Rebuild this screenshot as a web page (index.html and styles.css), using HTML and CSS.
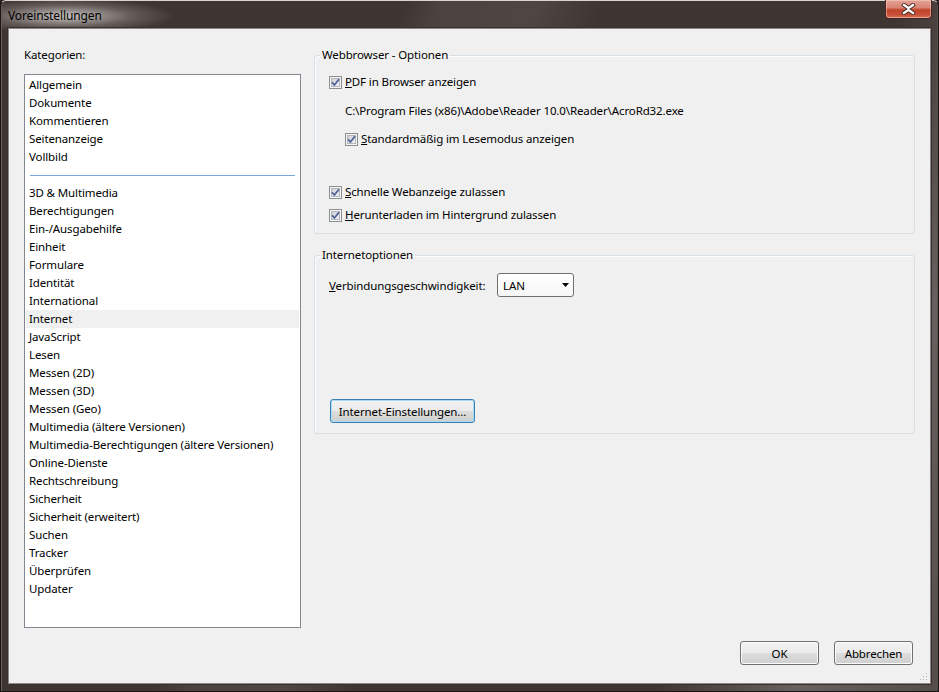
FILE: index.html
```html
<!DOCTYPE html>
<html lang="de">
<head>
    <meta charset="UTF-8">
    <title>Voreinstellungen</title>
    <link rel="stylesheet" href="styles.css">
</head>
<body>
    <div class="window">
        <div class="titlebar">
            <span class="title">Voreinstellungen</span>
            <div class="close-btn">
                <svg width="15" height="12" viewBox="0 0 15 12">
                    <path d="M3 2 L7.5 5.2 L12 2 M3 10 L7.5 6.8 L12 10" fill="none" stroke="#4a302a" stroke-width="4" stroke-linecap="square"/>
                    <path d="M3 2 L7.5 5.2 L12 2 M3 10 L7.5 6.8 L12 10" fill="none" stroke="#ffffff" stroke-width="2.2" stroke-linecap="square"/>
                </svg>
            </div>
        </div>

        <div class="client">
            <div class="main">
                <div class="categories">
                    <div class="label">Kate<u>g</u>orien:</div>
                    <ul class="cat-list">
                        <li>Allgemein</li>
                        <li>Dokumente</li>
                        <li>Kommentieren</li>
                        <li>Seitenanzeige</li>
                        <li>Vollbild</li>
                        <li class="separator"></li>
                        <li>3D &amp; Multimedia</li>
                        <li>Berechtigungen</li>
                        <li>Ein-/Ausgabehilfe</li>
                        <li>Einheit</li>
                        <li>Formulare</li>
                        <li>Identität</li>
                        <li>International</li>
                        <li class="selected">Internet</li>
                        <li>JavaScript</li>
                        <li>Lesen</li>
                        <li>Messen (2D)</li>
                        <li>Messen (3D)</li>
                        <li>Messen (Geo)</li>
                        <li>Multimedia (ältere Versionen)</li>
                        <li>Multimedia-Berechtigungen (ältere Versionen)</li>
                        <li>Online-Dienste</li>
                        <li>Rechtschreibung</li>
                        <li>Sicherheit</li>
                        <li>Sicherheit (erweitert)</li>
                        <li>Suchen</li>
                        <li>Tracker</li>
                        <li>Überprüfen</li>
                        <li>Updater</li>
                    </ul>
                </div>

                <div class="options">
                    <fieldset class="group group-web">
                        <legend>Webbrowser - Optionen</legend>
                        <div class="group-body">
                            <div class="check-row row-pdf">
                                <span class="check"><svg width="9" height="9" viewBox="0 0 9 9"><path d="M1 4.2 L3.4 7 L8 1.2" fill="none" stroke="#4a5e96" stroke-width="1.7"/></svg></span>
                                <span><u>P</u>DF in Browser anzeigen</span>
                            </div>
                            <div class="path">C:\Program Files (x86)\Adobe\Reader 10.0\Reader\AcroRd32.exe</div>
                            <div class="check-row row-read">
                                <span class="check"><svg width="9" height="9" viewBox="0 0 9 9"><path d="M1 4.2 L3.4 7 L8 1.2" fill="none" stroke="#4a5e96" stroke-width="1.7"/></svg></span>
                                <span><u>S</u>tandardmäßig im Lesemodus anzeigen</span>
                            </div>
                            <div class="check-row row-fast">
                                <span class="check"><svg width="9" height="9" viewBox="0 0 9 9"><path d="M1 4.2 L3.4 7 L8 1.2" fill="none" stroke="#4a5e96" stroke-width="1.7"/></svg></span>
                                <span><u>S</u>chnelle Webanzeige zulassen</span>
                            </div>
                            <div class="check-row row-bg">
                                <span class="check"><svg width="9" height="9" viewBox="0 0 9 9"><path d="M1 4.2 L3.4 7 L8 1.2" fill="none" stroke="#4a5e96" stroke-width="1.7"/></svg></span>
                                <span><u>H</u>erunterladen im Hintergrund zulassen</span>
                            </div>
                        </div>
                    </fieldset>

                    <fieldset class="group group-net">
                        <legend>Internetoptionen</legend>
                        <div class="group-body">
                            <div class="speed-row">
                                <span class="speed-label"><u>V</u>erbindungsgeschwindigkeit:</span>
                                <div class="combo">
                                    <span>LAN</span>
                                    <svg width="7" height="4" viewBox="0 0 7 4"><path d="M0 0 H7 L3.5 4 Z" fill="#000"/></svg>
                                </div>
                            </div>
                            <button class="btn btn-default">Internet-Einstellungen...</button>
                        </div>
                    </fieldset>
                </div>
            </div>

            <div class="footer">
                <button class="btn">OK</button>
                <button class="btn">Abbrechen</button>
            </div>

            <svg class="grip" width="9" height="9" viewBox="0 0 9 9">
                <rect x="7" y="1" width="1" height="1" fill="#b8b8b8"/>
                <rect x="4" y="4" width="1" height="1" fill="#b8b8b8"/>
                <rect x="7" y="4" width="1" height="1" fill="#b8b8b8"/>
                <rect x="1" y="7" width="1" height="1" fill="#b8b8b8"/>
                <rect x="4" y="7" width="1" height="1" fill="#b8b8b8"/>
                <rect x="7" y="7" width="1" height="1" fill="#b8b8b8"/>
            </svg>
        </div>
    </div>
</body>
</html>
```

FILE: styles.css
```css
body {
    margin: 0;
    padding: 0;
    background-color: #2a2220;
    font-family: "Noto Sans", "Open Sans", sans-serif;
    font-size: 11.5px;
    letter-spacing: -0.12px;
    color: #000;
}

.window {
    width: 939px;
    height: 692px;
    box-sizing: border-box;
    padding: 0 7px 7px 7px;
    display: flex;
    flex-direction: column;
    border-radius: 6px 6px 0 0;
    border: 1px solid #1a1412;
    border-top-color: #d8d4d2;
    background:
        radial-gradient(ellipse 110px 18px at 64px 15px, rgba(222, 219, 217, 0.85), rgba(160, 154, 151, 0.4) 60%, rgba(120, 112, 110, 0) 100%),
        linear-gradient(110deg, rgba(255, 255, 255, 0) 34%, rgba(255, 255, 255, 0.07) 37%, rgba(255, 255, 255, 0.09) 45%, rgba(255, 255, 255, 0) 51%, rgba(255, 255, 255, 0) 76%, rgba(255, 255, 255, 0.08) 80%, rgba(255, 255, 255, 0.22) 88%, rgba(255, 255, 255, 0.12) 100%),
        #3e3431;
    box-shadow: inset 1px 0 #6a5e5a, inset -1px 0 #5a4e4b;
}

.titlebar {
    height: 27px;
    display: flex;
    justify-content: space-between;
    align-items: flex-start;
    flex-shrink: 0;
}

.title {
    margin-top: 6px;
    line-height: 18px;
    font-size: 12px;
}

.close-btn {
    width: 47px;
    height: 19px;
    margin-top: -1px;
    margin-right: -1px;
    box-sizing: border-box;
    border: 1px solid #4a2620;
    border-top: none;
    border-radius: 0 0 4px 4px;
    background: linear-gradient(#e3a395 0%, #d88472 42%, #c2442b 55%, #c64f36 80%, #d6735a 100%);
    box-shadow: inset 0 0 0 1px rgba(255, 220, 210, 0.45);
    display: flex;
    justify-content: center;
    align-items: center;
}

.client {
    flex: 1;
    position: relative;
    display: flex;
    flex-direction: column;
    background-color: #f0f0f0;
    border: 1px solid #8c8684;
    box-shadow: 0 0 0 1px #3a302d;
    padding: 17px 15px 0 15px;
}

.main {
    height: 582px;
    display: flex;
    gap: 13px;
}

.categories {
    width: 277px;
    display: flex;
    flex-direction: column;
}

.label {
    line-height: 18px;
    margin-bottom: 10px;
}

.cat-list {
    flex: 1;
    list-style: none;
    margin: 0;
    padding: 1px;
    background-color: #fff;
    border: 1px solid #828790;
}

.cat-list li {
    height: 18px;
    line-height: 18px;
    padding-left: 3px;
    white-space: nowrap;
}

.cat-list .selected {
    background-color: #f0f0f0;
}

.cat-list .separator {
    position: relative;
}

.cat-list .separator::after {
    content: '';
    position: absolute;
    left: 4px;
    right: 4px;
    top: 9px;
    height: 1px;
    background-color: #76a7dc;
}

.options {
    width: 601px;
    display: flex;
    flex-direction: column;
}

.group {
    margin: 0;
    padding: 0;
    min-width: 0;
    border: 1px solid #d5dfe5;
    border-radius: 3px;
    box-shadow: inset 1px 1px #fafcfd;
}

.group legend {
    margin-left: 5px;
    padding: 0 2px;
    line-height: 18px;
}

.group-body {
    padding: 9px 14px 10px 14px;
    display: flex;
    flex-direction: column;
    align-items: flex-start;
}

.group-web .group-body {
    padding-bottom: 9px;
}

.group-net {
    margin-top: 12px;
}

.check-row {
    display: flex;
    align-items: center;
    gap: 3px;
    line-height: 18px;
}

.check {
    width: 13px;
    height: 13px;
    box-sizing: border-box;
    border: 1px solid #8e8f8f;
    box-shadow: inset 0 0 0 1px #f4f4f4, inset 0 0 0 2px #b4b8bd;
    background: linear-gradient(135deg, #c6cad0, #f8f8f8);
    display: flex;
    justify-content: center;
    align-items: center;
}

.check svg {
    display: block;
}

.path {
    line-height: 18px;
    margin: 11px 0 0 16px;
}

.row-read {
    margin: 10px 0 0 16px;
}

.row-fast {
    margin-top: 35px;
}

.row-bg {
    margin-top: 5px;
}

.speed-row {
    display: flex;
    align-items: center;
    height: 24px;
}

.speed-label {
    width: 168px;
}

.combo {
    width: 77px;
    height: 24px;
    box-sizing: border-box;
    border: 1px solid #707070;
    border-radius: 3px;
    background: linear-gradient(#ffffff, #f6f6f6);
    display: flex;
    justify-content: space-between;
    align-items: center;
    padding: 0 4px 0 5px;
}

.btn {
    height: 24px;
    padding: 0;
    white-space: nowrap;
    font-family: inherit;
    font-size: 11.5px;
    letter-spacing: -0.12px;
    color: #000;
    border: 1px solid #707070;
    border-radius: 3px;
    background: linear-gradient(#f2f2f2 0%, #ebebeb 50%, #dddddd 51%, #cfcfcf 100%);
    box-shadow: inset 0 0 0 1px #fbfbfb;
}

.btn-default {
    width: 145px;
    margin: 102px 0 0 1px;
    border-color: #3c7fb1;
    box-shadow: inset 0 0 0 1px #a6dcf6;
}

.footer {
    display: flex;
    justify-content: flex-end;
    gap: 15px;
    margin-top: 13px;
    margin-right: 2px;
}

.footer .btn {
    width: 79px;
}

.grip {
    position: absolute;
    right: 2px;
    bottom: 2px;
}
```
